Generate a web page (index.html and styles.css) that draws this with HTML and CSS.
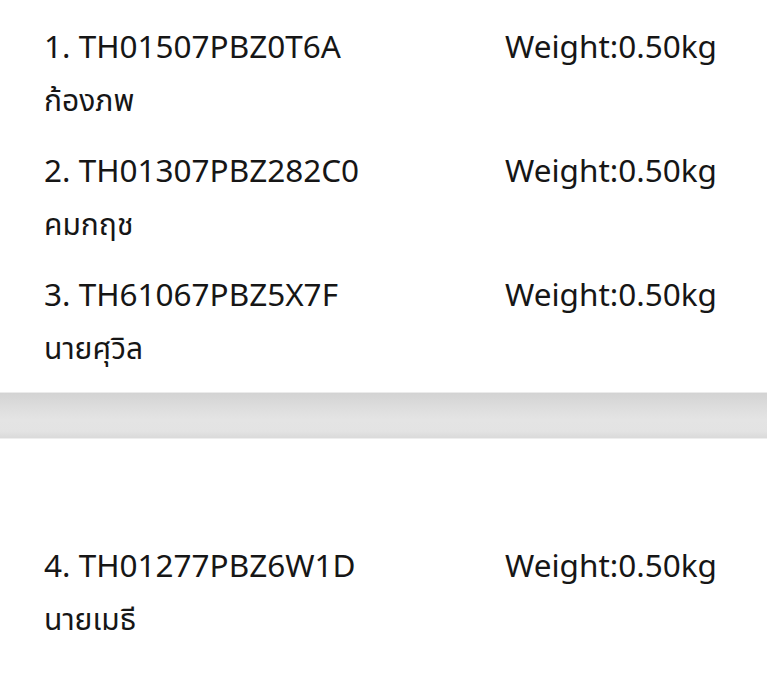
FILE: index.html
```html
<!DOCTYPE html>
<html lang="th">
<head>
<meta charset="utf-8">
<link rel="stylesheet" href="styles.css">
</head>
<body>
<section class="group first">
  <div class="item">
    <div class="line"><span class="code">1. TH01507PBZ0T6A</span><span class="weight">Weight:0.50kg</span></div>
    <div class="name">ก้องภพ</div>
  </div>
  <div class="item">
    <div class="line"><span class="code">2. TH01307PBZ282C0</span><span class="weight">Weight:0.50kg</span></div>
    <div class="name">คมกฤช</div>
  </div>
  <div class="item">
    <div class="line"><span class="code">3. TH61067PBZ5X7F</span><span class="weight">Weight:0.50kg</span></div>
    <div class="name">นายศุวิล</div>
  </div>
</section>
<div class="divider"></div>
<section class="group second">
  <div class="item">
    <div class="line"><span class="code">4. TH01277PBZ6W1D</span><span class="weight">Weight:0.50kg</span></div>
    <div class="name">นายเมธี</div>
  </div>
</section>
</body>
</html>
```
FILE: styles.css
```css
html, body {
  margin: 0;
  padding: 0;
  background: #ffffff;
}
body {
  width: 767px;
  height: 677px;
  overflow: hidden;
  font-family: "Noto Sans", "Noto Sans Thai", "DejaVu Sans", sans-serif;
  color: #161616;
}
.group {
  display: flex;
  flex-direction: column;
  gap: 28px;
  padding-left: 44px;
}
.group.first {
  padding-top: 24px;
  padding-bottom: 24px;
}
.group.second {
  padding-top: 104px;
}
.line {
  display: flex;
  font-size: 31.5px;
  line-height: 44px;
}
.code {
  width: 461px;
}
.name {
  font-size: 30px;
  line-height: 40px;
  margin-top: 12px;
}
.divider {
  height: 45px;
  background: linear-gradient(#d3d3d3, #dedede 35%, #e4e4e4 60%, #e3e3e3 85%, #dadada);
  border-top: 1px solid #ebebeb;
  border-bottom: 1px solid #eeeeee;
}
```
